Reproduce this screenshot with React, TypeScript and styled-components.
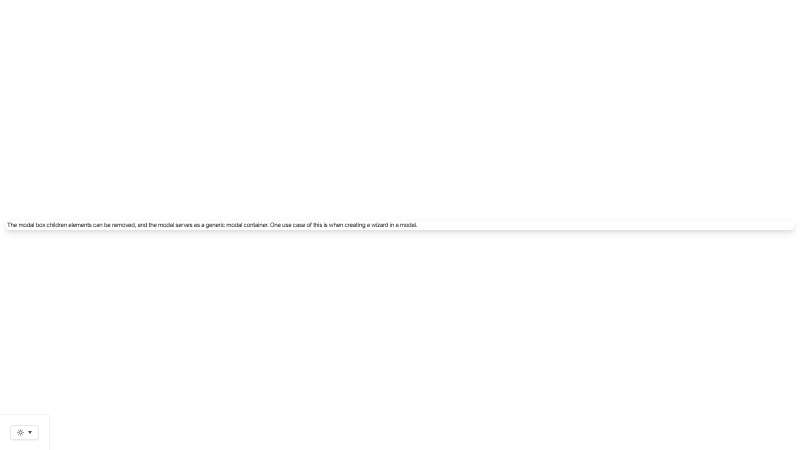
import styled, { createGlobalStyle } from "styled-components";

const GlobalStyle = createGlobalStyle`
  html, body {
    margin: 0;
    padding: 0;
    background: #fff;
  }
`;

const Page = styled.div`
  position: relative;
  width: 800px;
  height: 450px;
  overflow: hidden;
  display: flex;
  align-items: center;
  justify-content: center;
  font-family: Inter, "Noto Sans", sans-serif;
  text-rendering: geometricPrecision;
`;

const Dialog = styled.div`
  width: 788px;
  height: 9px;
  display: flex;
  align-items: center;
  box-sizing: border-box;
  padding: 0 1px;
  background: #fff;
  border-radius: 4px;
  box-shadow: 0 2px 3px rgba(0, 0, 0, 0.06), 0 3px 8px rgba(0, 0, 0, 0.1);
`;

const DialogText = styled.span`
  font-size: 6px;
  letter-spacing: -0.3px;
  line-height: 9px;
  color: #24282c;
  white-space: nowrap;
  filter: blur(0.2px);
`;

const ThemePanel = styled.div`
  position: absolute;
  left: 0;
  bottom: 0;
  width: 50px;
  height: 36px;
  box-sizing: border-box;
  padding: 10px 0 0 10px;
  border-top: 1px solid #f4f4f4;
  border-right: 1px solid #f2f2f2;
  border-top-right-radius: 2px;
`;

const ThemeButton = styled.button`
  width: 29px;
  height: 15px;
  padding: 0 0 0 6px;
  display: flex;
  align-items: center;
  gap: 4px;
  box-sizing: border-box;
  background: #fff;
  border: 1px solid #e6e8ea;
  border-radius: 3px;
  box-shadow: 0 1px 1px rgba(0, 0, 0, 0.05);
`;

const Arrow = styled.span`
  width: 0;
  height: 0;
  border-left: 2.5px solid transparent;
  border-right: 2.5px solid transparent;
  border-top: 3px solid #4a4f54;
`;

const SunIcon = () => (
  <svg width="7" height="7" viewBox="0 0 24 24" fill="none" stroke="#60656a" strokeWidth="3.2">
    <circle cx="12" cy="12" r="5" />
    <path d="M12 1v3M12 20v3M1 12h3M20 12h3M4.2 4.2l2.1 2.1M17.7 17.7l2.1 2.1M4.2 19.8l2.1-2.1M17.7 6.3l2.1-2.1" />
  </svg>
);

export default function App() {
  return (
    <Page>
      <GlobalStyle />
      <Dialog>
        <DialogText>
          The modal box children elements can be removed, and the modal serves as a generic modal
          container. One use case of this is when creating a wizard in a modal.
        </DialogText>
      </Dialog>
      <ThemePanel>
        <ThemeButton>
          <SunIcon />
          <Arrow />
        </ThemeButton>
      </ThemePanel>
    </Page>
  );
}
